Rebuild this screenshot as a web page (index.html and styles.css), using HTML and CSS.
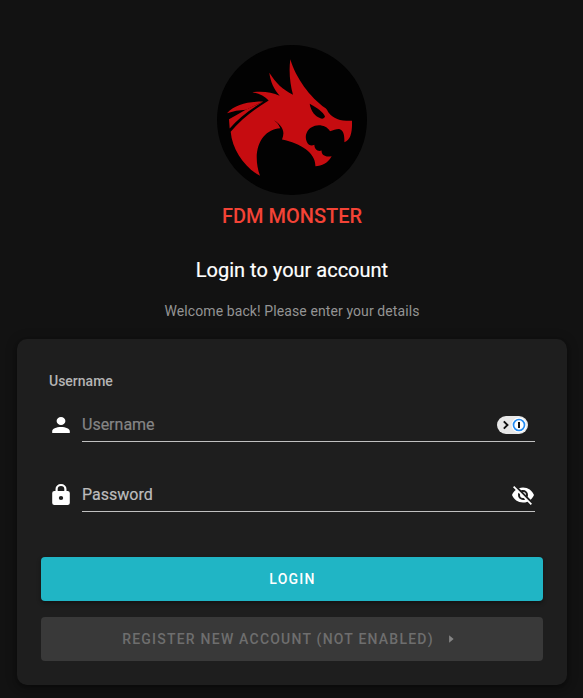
FILE: index.html
```html
<!DOCTYPE html>
<html lang="en">
<head>
<meta charset="utf-8">
<title>FDM Monster</title>
<link rel="stylesheet" href="styles.css">
</head>
<body>
<main class="login">
  <svg class="logo" viewBox="21 20.5 450 450" aria-hidden="true">
    <circle cx="246" cy="245.5" r="225" fill="#020202"/>
    <g fill="#c60c10">
      <path d="M241 63C257 118 300 178 347 210Q351 213 355 222C370 243 394 249 426 248C427 280 423 305 403 312C404 290 400 276 389 273C380 272 370 277 360 279C350 260 321 256 305 267C286 277 281 305 297 320Q305 324 313 320C314 335 324 341 335 337C333 349 345 359 365 354C353 375 336 383 316 384C318 346 275 316 216 304C225 282 222 262 182 240Q204 251 211 270C158 272 122 333 150 413C103 388 67 335 62 281C93 243 133 213 176 187C164 173 148 166 127 162C158 158 186 162 209 173C192 154 181 130 178 104C197 134 218 155 249 170C240 137 236 99 241 63Z"/>
      <path d="M51 225C76 198 116 190 160 190Q130 204 108 215Q77 216 51 225Z"/>
      <path d="M57 243Q80 231 107 215Q132 203 160 191C121 213 85 240 59 271Z"/>
    </g>
    <path fill="#020202" d="M299 197C320 209 339 221 345 235Q343 243 333 241C315 236 303 219 299 197Z"/>
  </svg>
  <div class="brand">FDM MONSTER</div>
  <h1 class="title">Login to your account</h1>
  <p class="subtitle">Welcome back! Please enter your details</p>

  <form class="card">
    <div class="label">Username</div>
    <div class="field">
      <svg class="icon" viewBox="0 0 24 24"><path d="M12 4a4 4 0 1 1 0 8 4 4 0 0 1 0-8m0 10c4.420 0 8 1.790 8 4v2H4v-2c0-2.210 3.580-4 8-4Z"/></svg>
      <div class="control">
        <span class="placeholder">Username</span>
        <svg class="manager" viewBox="0 0 31 18">
          <rect width="31" height="18" rx="9" fill="#e8e8e8"/>
          <path d="M6.800 5.300L10.500 9L6.800 12.700" fill="none" stroke="#111" stroke-width="1.900"/>
          <circle cx="22" cy="9" r="7.500" fill="#fff"/>
          <circle cx="22" cy="9" r="5.500" fill="#fff" stroke="#248cf3" stroke-width="1.700"/>
          <rect x="21" y="6" width="2" height="6" fill="#111"/>
        </svg>
      </div>
    </div>
    <div class="field">
      <svg class="icon" viewBox="0 0 24 24"><path d="M12 17a2 2 0 0 0 2-2 2 2 0 0 0-4 0 2 2 0 0 0 2 2m6-9a2 2 0 0 1 2 2v10a2 2 0 0 1-2 2H6a2 2 0 0 1-2-2V10a2 2 0 0 1 2-2h1V6a5 5 0 0 1 10 0v2h1m-6-5a3 3 0 0 0-3 3v2h6V6a3 3 0 0 0-3-3Z"/></svg>
      <div class="control">
        <span class="placeholder strong">Password</span>
        <svg class="icon" viewBox="0 0 24 24"><path d="M11.830 9L15 12.160V12a3 3 0 0 0-3-3h-.170m-4.300.8l1.550 1.550c-.050.210-.080.420-.080.650a3 3 0 0 0 3 3c.220 0 .440-.030.650-.080l1.550 1.550c-.670.330-1.410.530-2.200.530a5 5 0 0 1-5-5c0-.790.200-1.530.530-2.200M2 4.270l2.280 2.280.450.450C3.080 8.300 1.780 10 1 12c1.730 4.390 6 7.500 11 7.500 1.550 0 3.030-.300 4.380-.840l.430.420L19.730 22 21 20.730 3.270 3M12 7a5 5 0 0 1 5 5c0 .640-.130 1.260-.360 1.820l2.930 2.930c1.500-1.250 2.700-2.890 3.430-4.750-1.730-4.390-6-7.500-11-7.500-1.400 0-2.740.250-4 .700l2.170 2.150C10.740 7.130 11.350 7 12 7Z"/></svg>
      </div>
    </div>
    <button class="button primary" type="button">LOGIN</button>
    <button class="button disabled" type="button" disabled>REGISTER NEW ACCOUNT (NOT ENABLED)<svg class="arrow" viewBox="0 0 24 24"><path d="M9.500 17l6-5-6-5v10Z"/></svg></button>
  </form>
</main>
</body>
</html>
```
FILE: styles.css
```css
* { box-sizing: border-box; }

body {
  margin: 0;
  background: #121212;
  color: #fff;
  font-family: Roboto, "Liberation Sans", sans-serif;
}

.login {
  display: flex;
  flex-direction: column;
  align-items: center;
  height: 698px;
  padding: 45px 16px 0 17px;
  overflow: hidden;
}

.logo { display: block; width: 150px; height: 150px; flex: none; }

.brand {
  margin-top: 5px;
  color: #f44336;
  font-size: 20px;
  font-weight: 500;
  line-height: 32px;
}

.title {
  margin: 22px 0 0;
  font-size: 20px;
  font-weight: 400;
  line-height: 32px;
  -webkit-text-stroke: 0.2px currentColor;
}

.subtitle {
  margin: 14px 0 0;
  color: #949494;
  font-size: 14px;
  line-height: 22px;
  letter-spacing: 0.1px;
}

.card {
  width: 100%;
  height: 346px;
  margin-top: 17px;
  padding: 31px 24px 24px;
  border-radius: 10px;
  background: #1e1e1e;
  box-shadow: 0 3px 5px rgba(0, 0, 0, 0.3), 0 1px 12px rgba(0, 0, 0, 0.25);
}

.label {
  margin-left: 8px;
  color: #b4b4b4;
  font-size: 14px;
  font-weight: 500;
  line-height: 22px;
}

.field {
  display: flex;
  gap: 9px;
  height: 34px;
  margin: 16px 8px 0;
}

.field + .field { margin-top: 36px; }

.icon { display: block; flex: none; width: 24px; height: 24px; fill: #fff; }
.field > .icon { margin-top: 5px; transform: scaleX(1.1); }

.control {
  display: flex;
  flex: 1;
  align-items: center;
  justify-content: space-between;
  border-bottom: 1px solid #c1c1c1;
}

.placeholder {
  color: #858585;
  font-size: 16px;
  line-height: 24px;
  -webkit-text-stroke: 0.2px currentColor;
}
.placeholder.strong { color: #bcbcbc; }
.manager { width: 31px; height: 18px; margin-right: 7px; }

.button {
  display: flex;
  align-items: center;
  justify-content: center;
  width: 100%;
  height: 44px;
  margin: 45px 0 0;
  padding: 0;
  border: 0;
  border-radius: 4px;
  font: 500 14px/20px Roboto, "Liberation Sans", sans-serif;
  letter-spacing: 1.22px;
}

.primary {
  padding-left: 1px;
  background: #20b5c5;
  color: #fff;
  box-shadow: 0 2px 4px rgba(0, 0, 0, 0.4);
}

.disabled { margin-top: 16px; padding-right: 2px; background: #393939; color: #6e6e6e; }
.arrow { width: 18px; height: 18px; margin-left: 8px; fill: #858585; }
```
